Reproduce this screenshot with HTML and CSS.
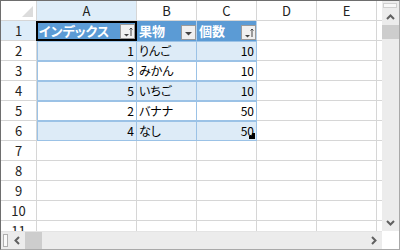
FILE: index.html
```html
<!DOCTYPE html>
<html lang="ja">
<head>
<meta charset="utf-8">
<link rel="stylesheet" href="styles.css">
</head>
<body>
<div class="frame">
  <div class="sheet">
    <div class="grid">
      <div class="corner"><span class="tri"></span></div>
      <div class="ch sel">A</div><div class="ch">B</div><div class="ch">C</div><div class="ch">D</div><div class="ch">E</div><div class="ch"></div>

      <div class="rh sel">1</div>
      <div class="c th active">インデックス<span class="fb"><svg width="13" height="13" viewBox="0 0 13 13"><path d="M3 9h5l-2.5 2.5z" fill="#444"/><path d="M10 3v8M8.5 4.5L10 3l1.5 1.5" stroke="#444" stroke-width="1" fill="none"/></svg></span></div>
      <div class="c th">果物<span class="fb"><svg width="13" height="13" viewBox="0 0 13 13"><path d="M3 6h7l-3.5 3.5z" fill="#444"/></svg></span></div>
      <div class="c th">個数<span class="fb"><svg width="13" height="13" viewBox="0 0 13 13"><path d="M3 9h5l-2.5 2.5z" fill="#444"/><path d="M10 3v8M8.5 4.5L10 3l1.5 1.5" stroke="#444" stroke-width="1" fill="none"/></svg></span></div>
      <div class="c"></div><div class="c"></div><div class="c"></div>

      <div class="rh">2</div>
      <div class="c td band first num">1</div><div class="c td band">りんご</div><div class="c td band num">10</div>
      <div class="c"></div><div class="c"></div><div class="c"></div>

      <div class="rh">3</div>
      <div class="c td first num">3</div><div class="c td">みかん</div><div class="c td num">10</div>
      <div class="c"></div><div class="c"></div><div class="c"></div>

      <div class="rh">4</div>
      <div class="c td band first num">5</div><div class="c td band">いちご</div><div class="c td band num">10</div>
      <div class="c"></div><div class="c"></div><div class="c"></div>

      <div class="rh">5</div>
      <div class="c td first num">2</div><div class="c td">バナナ</div><div class="c td num">50</div>
      <div class="c"></div><div class="c"></div><div class="c"></div>

      <div class="rh">6</div>
      <div class="c td band first num">4</div><div class="c td band">なし</div><div class="c td band num last">50<span class="handle"></span></div>
      <div class="c"></div><div class="c"></div><div class="c"></div>

      <div class="rh">7</div><div class="c"></div><div class="c"></div><div class="c"></div><div class="c"></div><div class="c"></div><div class="c"></div>
      <div class="rh">8</div><div class="c"></div><div class="c"></div><div class="c"></div><div class="c"></div><div class="c"></div><div class="c"></div>
      <div class="rh">9</div><div class="c"></div><div class="c"></div><div class="c"></div><div class="c"></div><div class="c"></div><div class="c"></div>
      <div class="rh">10</div><div class="c"></div><div class="c"></div><div class="c"></div><div class="c"></div><div class="c"></div><div class="c"></div>
      <div class="rh">11</div><div class="c"></div><div class="c"></div><div class="c"></div><div class="c"></div><div class="c"></div><div class="c"></div>
    </div>
  </div>
  <div class="vscroll">
    <div class="split-v"></div>
    <div class="arrow"><svg width="9" height="6" viewBox="0 0 9 6"><path d="M1 5L4.5 1.5L8 5" stroke="#606060" stroke-width="2" fill="none"/></svg></div>
    <div class="vthumb"></div>
    <div class="vtrack"></div>
    <div class="arrow"><svg width="9" height="6" viewBox="0 0 9 6"><path d="M1 1L4.5 4.5L8 1" stroke="#606060" stroke-width="2" fill="none"/></svg></div>
  </div>
  <div class="hscroll">
    <div class="split-h"></div>
    <div class="harrow"><svg width="6" height="9" viewBox="0 0 6 9"><path d="M5 1L1.5 4.5L5 8" stroke="#606060" stroke-width="2" fill="none"/></svg></div>
    <div class="hthumb"></div>
    <div class="htrack"></div>
    <div class="harrow"><svg width="6" height="9" viewBox="0 0 6 9"><path d="M1 1L4.5 4.5L1 8" stroke="#606060" stroke-width="2" fill="none"/></svg></div>
  </div>
  <div class="sq"></div>
</div>
</body>
</html>
```

FILE: styles.css
```css
html, body {
  margin: 0;
  padding: 0;
  background: #fff;
}
body {
  font-family: "Noto Sans CJK JP", "Noto Sans", sans-serif;
  font-size: 12px;
  color: #000;
}
.frame {
  width: 400px;
  height: 250px;
  box-sizing: border-box;
  border: 1px solid #a9a9a9;
  border-left-color: #6e6e6e;
  border-top-color: #6e6e6e;
  display: grid;
  grid-template-columns: 381px 17px;
  grid-template-rows: 230px 18px;
  overflow: hidden;
}
.sheet {
  overflow: hidden;
  background: #fff;
}
.grid {
  display: grid;
  grid-template-columns: 36px 100px 60px 60px 60px 60px 60px;
  grid-auto-rows: 20px;
}
.grid > div {
  box-sizing: border-box;
  border-right: 1px solid #d6d6d6;
  border-bottom: 1px solid #d6d6d6;
  display: flex;
  align-items: center;
  white-space: nowrap;
  overflow: visible;
}
.corner {
  position: relative;
  background: #fff;
}
.tri {
  position: absolute;
  right: 3px;
  bottom: 3px;
  width: 0;
  height: 0;
  border-left: 11px solid transparent;
  border-bottom: 11px solid #dcdcdc;
}
.ch {
  justify-content: center;
  font-size: 13px;
  color: #222;
}
.rh {
  justify-content: center;
  font-size: 13px;
  color: #222;
}
.ch.sel, .rh.sel {
  background: #deedf9;
}
.c {
  position: relative;
  padding: 0 2px;
}
.th {
  background: #5b9bd5;
  color: #fff;
  font-weight: bold;
  font-size: 13px;
  font-feature-settings: "palt";
  border-right-color: #b4d0ea !important;
  border-bottom-color: #5b9bd5 !important;
}
.th.active::after {
  content: "";
  position: absolute;
  left: -1px;
  top: 0;
  right: -1px;
  bottom: -1px;
  border: 2px solid #000;
  box-sizing: border-box;
  pointer-events: none;
}
.fb {
  position: absolute;
  right: 0;
  bottom: 0;
  width: 15px;
  height: 15px;
  box-sizing: border-box;
  border: 1px solid #9a9a9a;
  background: #f0f0f0;
  display: flex;
  align-items: center;
  justify-content: center;
}
.th.active .fb {
  right: 1px;
  bottom: 1px;
}
.td {
  font-feature-settings: "palt";
  border-right-color: #9bc2e6 !important;
  border-bottom-color: #9bc2e6 !important;
  box-shadow: inset 0 1px 0 #9bc2e6;
}
.td.first {
  box-shadow: inset 1px 1px 0 #9bc2e6;
}
.band {
  background: #ddebf7;
}
.num {
  justify-content: flex-end;
}
.handle {
  position: absolute;
  right: 1px;
  bottom: 1px;
  width: 6px;
  height: 6px;
  box-sizing: border-box;
  border-right: 3px solid #000;
  border-bottom: 3px solid #000;
}
.vscroll {
  background: #ececec;
  display: flex;
  flex-direction: column;
  align-items: stretch;
}
.split-v {
  margin: 2px 2px 0 1px;
  height: 5px;
  box-sizing: border-box;
  border: 1px solid #d0d0d0;
  background: #f8f8f8;
}
.arrow {
  height: 17px;
  display: flex;
  align-items: center;
  justify-content: center;
}
.vthumb {
  height: 14px;
  background: #cdcdcd;
}
.vtrack {
  flex: 1;
}
.hscroll {
  background: #ececec;
  display: flex;
  align-items: stretch;
  border-top: 1px solid #e4e4e4;
}
.split-h {
  width: 5px;
  margin: 2px 0 2px 2px;
  box-sizing: border-box;
  border: 1px solid #b0b0b0;
  background: #fafafa;
}
.harrow {
  width: 17px;
  display: flex;
  align-items: center;
  justify-content: center;
}
.hthumb {
  width: 17px;
  background: #cdcdcd;
}
.htrack {
  flex: 1;
}
.sq {
  background: #fff;
}
```
